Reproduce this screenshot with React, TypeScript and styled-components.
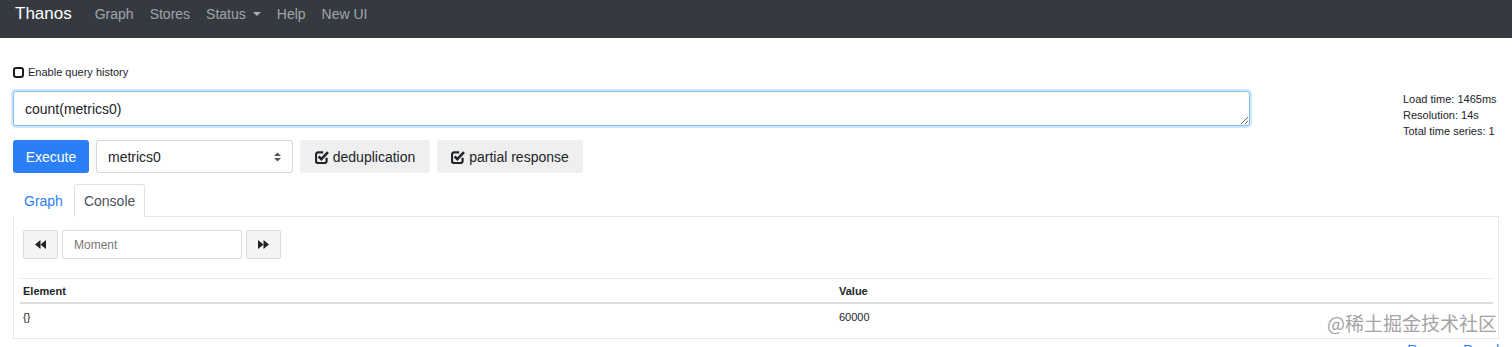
import styled, { createGlobalStyle } from 'styled-components';

const GlobalStyle = createGlobalStyle`
  * { box-sizing: border-box; }
  body {
    margin: 0;
    background: #fff;
    color: #212529;
    font-family: "Liberation Sans", Arial, sans-serif;
  }
`;

const CheckSquareIcon = () => (
  <svg width="14" height="14" viewBox="0 0 14 14" fill="none">
    <path
      d="M11.6 7.8V11a2 2 0 0 1-2 2H3a2 2 0 0 1-2-2V4.4a2 2 0 0 1 2-2h5.2"
      stroke="#212529"
      strokeWidth="2.2"
    />
    <path d="M3.6 6.4L6.3 9.1L13 2.2" stroke="#212529" strokeWidth="2.6" />
  </svg>
);

const BackIcon = () => (
  <svg width="11" height="9" viewBox="0 0 11 9">
    <polygon points="5.5,0 5.5,9 0,4.5" fill="#222" />
    <polygon points="11,0 11,9 5.5,4.5" fill="#222" />
  </svg>
);

const ForwardIcon = () => (
  <svg width="11" height="9" viewBox="0 0 11 9">
    <polygon points="0,0 0,9 5.5,4.5" fill="#222" />
    <polygon points="5.5,0 5.5,9 11,4.5" fill="#222" />
  </svg>
);

const SelectArrows = () => (
  <svg width="7" height="10" viewBox="0 0 7 10">
    <polygon points="0,4 7,4 3.5,0.5" fill="#555" />
    <polygon points="0,6 7,6 3.5,9.5" fill="#555" />
  </svg>
);

export default function App() {
  return (
    <Page>
      <GlobalStyle />
      <Navbar>
        <Brand>Thanos</Brand>
        <NavLink>Graph</NavLink>
        <NavLink>Stores</NavLink>
        <NavLink>
          Status <Caret />
        </NavLink>
        <NavLink>Help</NavLink>
        <NavLink>New UI</NavLink>
      </Navbar>

      <Content>
        <HistoryRow>
          <CheckBox />
          Enable query history
        </HistoryRow>

        <QueryRow>
          <QueryInput defaultValue="count(metrics0)" spellCheck={false} />
          <Stats>
            <div>Load time: 1465ms</div>
            <div>Resolution: 14s</div>
            <div>Total time series: 1</div>
          </Stats>
        </QueryRow>

        <Controls>
          <ExecuteButton>Execute</ExecuteButton>
          <MetricSelect>
            metrics0
            <SelectArrows />
          </MetricSelect>
          <ToggleButton $width={130}>
            <CheckSquareIcon />
            deduplication
          </ToggleButton>
          <ToggleButton $width={146}>
            <CheckSquareIcon />
            partial response
          </ToggleButton>
        </Controls>

        <Tabs>
          <Tab>Graph</Tab>
          <Tab $active>Console</Tab>
        </Tabs>

        <Panel>
          <MomentRow>
            <StepButton>
              <BackIcon />
            </StepButton>
            <MomentInput placeholder="Moment" />
            <StepButton>
              <ForwardIcon />
            </StepButton>
          </MomentRow>

          <ResultTable>
            <thead>
              <tr>
                <HeadCell $width={816}>Element</HeadCell>
                <HeadCell>Value</HeadCell>
              </tr>
            </thead>
            <tbody>
              <tr>
                <BodyCell>{'{}'}</BodyCell>
                <BodyCell>60000</BodyCell>
              </tr>
            </tbody>
          </ResultTable>
        </Panel>

        <RemoveLink>Remove Panel</RemoveLink>
      </Content>

      <Watermark>@稀土掘金技术社区</Watermark>
    </Page>
  );
}

const Page = styled.div`
  position: relative;
  width: 1512px;
  height: 347px;
  overflow: hidden;
`;
const Navbar = styled.nav`
  display: flex;
  align-items: flex-start;
  height: 38px;
  padding: 3px 15px 0;
  background: #343a40;
`;
const Brand = styled.span`
  margin-right: 15px;
  font-size: 17px;
  line-height: 22px;
  color: #fff;
`;
const NavLink = styled.span`
  display: flex;
  align-items: center;
  padding: 0 8px;
  font-size: 14px;
  line-height: 22px;
  color: rgba(255, 255, 255, 0.55);
`;
const Caret = styled.span`
  margin-left: 7px;
  border-top: 4px solid rgba(255, 255, 255, 0.6);
  border-left: 4px solid transparent;
  border-right: 4px solid transparent;
`;
const Content = styled.div`
  padding: 26px 13px 0;
`;
const HistoryRow = styled.label`
  display: flex;
  align-items: center;
  gap: 4px;
  height: 16px;
  margin-bottom: 11px;
  font-size: 11px;
  color: #212529;
`;
const CheckBox = styled.span`
  width: 11px;
  height: 11px;
  border: 2px solid #1d1d1d;
  border-radius: 3px;
`;
const QueryRow = styled.div`
  display: flex;
  align-items: flex-start;
  gap: 153px;
`;
const QueryInput = styled.textarea`
  width: 1237px;
  height: 35px;
  padding: 7px 11px 5px;
  border: 1px solid #80bdff;
  border-radius: 3px;
  box-shadow: 0 0 0 2px rgba(0, 123, 255, 0.18);
  font-family: "Liberation Sans", Arial, sans-serif;
  font-size: 14px;
  line-height: 20px;
  color: #212529;
  outline: none;
`;
const Stats = styled.div`
  font-size: 11px;
  line-height: 16px;
  color: #212529;
  white-space: nowrap;
`;
const Controls = styled.div`
  display: flex;
  gap: 7px;
  height: 33px;
  margin-top: 1px;
`;
const ExecuteButton = styled.button`
  width: 76px;
  border: none;
  border-radius: 3px;
  background: #2b7ff6;
  color: #fff;
  font-family: inherit;
  font-size: 14px;
`;
const MetricSelect = styled.div`
  display: flex;
  align-items: center;
  justify-content: space-between;
  width: 197px;
  padding: 0 11px;
  border: 1px solid #d6d6d6;
  border-radius: 3px;
  font-size: 14px;
  color: #212529;
`;
const ToggleButton = styled.div<{ $width: number }>`
  display: flex;
  align-items: center;
  justify-content: center;
  gap: 4px;
  width: ${(p) => p.$width}px;
  border-radius: 3px;
  background: #efefef;
  font-size: 14px;
  color: #212529;
`;
const Tabs = styled.div`
  display: flex;
  height: 32px;
  margin-top: 11px;
`;
const Tab = styled.div<{ $active?: boolean }>`
  position: relative;
  z-index: 1;
  height: 33px;
  padding: 0 ${(p) => (p.$active ? 9 : 10)}px 1px;
  display: flex;
  align-items: center;
  border: 1px solid ${(p) => (p.$active ? '#e1e1e1' : 'transparent')};
  border-bottom: none;
  border-radius: 3px 3px 0 0;
  background: #fff;
  font-size: 14px;
  color: ${(p) => (p.$active ? '#495057' : '#2b7ff6')};
`;
const Panel = styled.div`
  height: 123px;
  padding: 13px 5px 0 6px;
  border: 1px solid #e6e6e6;
`;
const MomentRow = styled.div`
  display: flex;
  gap: 4px;
  height: 29px;
  margin-left: 3px;
`;
const StepButton = styled.div`
  display: flex;
  align-items: center;
  justify-content: center;
  width: 35px;
  border: 1px solid #dcdcdc;
  border-radius: 2px;
  background: #f4f4f4;
`;
const MomentInput = styled.input`
  width: 180px;
  padding: 0 11px;
  border: 1px solid #dcdcdc;
  border-radius: 2px;
  font-family: inherit;
  font-size: 12px;
  outline: none;
  &::placeholder {
    color: #777;
  }
`;
const ResultTable = styled.table`
  width: 100%;
  margin-top: 19px;
  border-collapse: collapse;
`;
const HeadCell = styled.th<{ $width?: number }>`
  width: ${(p) => (p.$width ? `${p.$width}px` : 'auto')};
  padding: 6px 3px 4px;
  border-top: 1px solid #e8e8e8;
  border-bottom: 2px solid #dedede;
  font-size: 11px;
  line-height: 13px;
  font-weight: bold;
  text-align: left;
  color: #212529;
`;
const BodyCell = styled.td`
  padding: 7px 3px;
  font-size: 11px;
  line-height: 13px;
  color: #212529;
`;
const RemoveLink = styled.div`
  margin-top: 1px;
  text-align: right;
  font-size: 14px;
  line-height: 20px;
  color: #2b7ff6;
`;
const Watermark = styled.div`
  position: absolute;
  right: 14px;
  top: 309px;
  padding: 0 1px;
  background: rgba(255, 255, 255, 0.85);
  font-family: "Noto Sans CJK SC", sans-serif;
  font-size: 19px;
  line-height: 28px;
  color: #a4a4a4;
`;
